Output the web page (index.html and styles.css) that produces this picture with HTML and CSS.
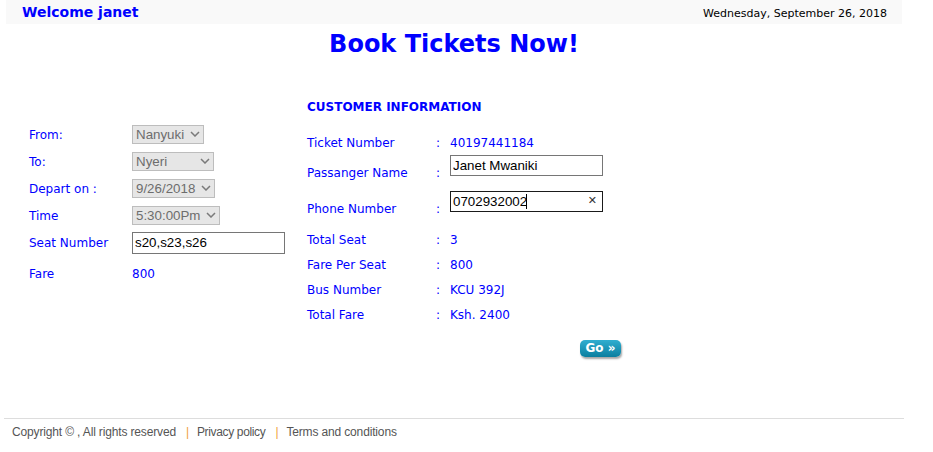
FILE: index.html
```html
<!DOCTYPE html>
<html>
<head>
<meta charset="utf-8">
<title>Book Tickets</title>
<link rel="stylesheet" href="styles.css">
</head>
<body>
<div class="page">
  <div class="topbar">
    <span class="welcome">Welcome janet</span>
    <span class="date">Wednesday, September 26, 2018</span>
  </div>
  <h1 class="title">Book Tickets Now!</h1>
  <div class="main">
    <div class="trip">
      <div class="trip-row">
        <span class="label">From:</span>
        <span class="sel-wrap w72"><select class="sel" disabled><option>Nanyuki</option></select><svg class="chev" viewBox="0 0 10 6"><path d="M1 1l4 4 4-4" fill="none" stroke="#7a7a7a" stroke-width="1.5"/></svg></span>
      </div>
      <div class="trip-row">
        <span class="label">To:</span>
        <span class="sel-wrap w82"><select class="sel" disabled><option>Nyeri</option></select><svg class="chev" viewBox="0 0 10 6"><path d="M1 1l4 4 4-4" fill="none" stroke="#7a7a7a" stroke-width="1.5"/></svg></span>
      </div>
      <div class="trip-row">
        <span class="label">Depart on :</span>
        <span class="sel-wrap w83"><select class="sel" disabled><option>9/26/2018</option></select><svg class="chev" viewBox="0 0 10 6"><path d="M1 1l4 4 4-4" fill="none" stroke="#7a7a7a" stroke-width="1.5"/></svg></span>
      </div>
      <div class="trip-row">
        <span class="label">Time</span>
        <span class="sel-wrap w88"><select class="sel" disabled><option>5:30:00Pm</option></select><svg class="chev" viewBox="0 0 10 6"><path d="M1 1l4 4 4-4" fill="none" stroke="#7a7a7a" stroke-width="1.5"/></svg></span>
      </div>
      <div class="trip-row">
        <span class="label">Seat Number</span>
        <input class="txt seat" type="text" value="s20,s23,s26">
      </div>
      <div class="trip-row fare-row">
        <span class="label">Fare</span>
        <span class="value">800</span>
      </div>
    </div>
    <div class="customer">
      <div class="cust-head">CUSTOMER INFORMATION</div>
      <div class="info">
        <div class="info-row"><span class="label">Ticket Number</span><span class="colon">:</span><span class="value">40197441184</span></div>
        <div class="info-row tall"><span class="label">Passanger Name</span><span class="colon">:</span><span class="field"><input class="txt" type="text" value="Janet Mwaniki"></span></div>
        <div class="info-row tall"><span class="label">Phone Number</span><span class="colon">:</span><span class="field"><span class="focus-wrap"><input class="txt focused" type="text" value="0702932002"><span class="caret"></span><span class="clear">✕</span></span></span></div>
        <div class="info-row"><span class="label">Total Seat</span><span class="colon">:</span><span class="value">3</span></div>
        <div class="info-row"><span class="label">Fare Per Seat</span><span class="colon">:</span><span class="value">800</span></div>
        <div class="info-row"><span class="label">Bus Number</span><span class="colon">:</span><span class="value">KCU 392J</span></div>
        <div class="info-row"><span class="label">Total Fare</span><span class="colon">:</span><span class="value">Ksh. 2400</span></div>
      </div>
      <button class="go" type="button">Go »</button>
    </div>
  </div>
  <div class="footer">
    <span>Copyright © , All rights reserved</span>
    <span class="sep">|</span>
    <span class="tight">Privacy policy</span>
    <span class="sep">|</span>
    <span>Terms and conditions</span>
  </div>
</div>
</body>
</html>
```

FILE: styles.css
```css
html, body {
  margin: 0;
  padding: 0;
  background: #fff;
}

body {
  font-family: "DejaVu Sans", Verdana, sans-serif;
  font-size: 12px;
  color: #0000ff;
}

.page {
  width: 900px;
  margin-left: 4px;
}

.topbar {
  margin: 0 2px;
  height: 24px;
  background: #f9f9f9;
  display: flex;
  justify-content: space-between;
  align-items: center;
  padding: 0 15px 0 16px;
}

.welcome {
  font-size: 14px;
  font-weight: bold;
  color: #0000ff;
  line-height: 17px;
}

.date {
  font-size: 11px;
  color: #000;
  line-height: 13px;
  padding-top: 3px;
}

.title {
  margin: 6px 0 0;
  font-size: 24px;
  line-height: 28px;
  font-weight: bold;
  text-align: center;
  color: #0000ff;
}

.main {
  display: flex;
  align-items: flex-start;
  padding-left: 25px;
}

.trip {
  width: 278px;
  margin-top: 63px;
  display: flex;
  flex-direction: column;
}

.trip-row {
  height: 27px;
  display: flex;
  align-items: center;
}

.trip-row .label {
  width: 103px;
  flex: none;
  line-height: 15px;
  padding-top: 2px;
}

.trip-row.fare-row {
  margin-top: 5px;
  height: 24px;
}

.trip-row .value {
  padding-top: 2px;
}

.value {
  line-height: 15px;
}

.sel-wrap {
  position: relative;
  display: inline-block;
  height: 19px;
}

.w72 { width: 72px; }
.w82 { width: 82px; }
.w83 { width: 83px; }
.w88 { width: 88px; }

.sel {
  -webkit-appearance: none;
  appearance: none;
  width: 100%;
  height: 19px;
  margin: 0;
  padding: 0 0 0 3px;
  border: 1px solid #bdbdbd;
  border-radius: 0;
  background: #e6e6e6;
  color: #6d6d6d;
  font-family: "Liberation Sans", Arial, sans-serif;
  font-size: 13.333px;
  line-height: 17px;
  opacity: 1;
}

.chev {
  position: absolute;
  right: 4px;
  top: 6px;
  width: 10px;
  height: 6px;
  pointer-events: none;
}

.txt {
  box-sizing: border-box;
  width: 153px;
  height: 21px;
  margin: 0;
  padding: 1px 2px;
  border: 1px solid #767676;
  border-radius: 0;
  font-family: "Liberation Sans", Arial, sans-serif;
  font-size: 13.333px;
  color: #000;
  background: #fff;
  outline: none;
}

.txt.seat {
  height: 22px;
}

.customer {
  margin-top: 42px;
  display: flex;
  flex-direction: column;
}

.cust-head {
  font-weight: bold;
  line-height: 15px;
  margin-bottom: 14px;
}

.info {
  display: flex;
  flex-direction: column;
}

.info-row {
  display: grid;
  grid-template-columns: 129px 14px 160px;
  height: 25px;
  align-items: center;
  line-height: 15px;
}

.info-row > .label,
.info-row > .colon,
.info-row > .value {
  padding-top: 3px;
}

.info-row.tall {
  height: 36px;
}

.info-row.tall > .label,
.info-row.tall > .colon {
  padding-top: 2px;
}

.field {
  padding: 1px 0 14px;
  display: block;
  height: 21px;
}

.focus-wrap {
  position: relative;
  display: inline-block;
}

.txt.focused {
  border-color: #1a1a1a;
}

.caret {
  position: absolute;
  left: 76px;
  top: 3px;
  width: 1px;
  height: 15px;
  background: #000;
}

.clear {
  position: absolute;
  right: 6px;
  top: 3px;
  font-family: "DejaVu Sans", sans-serif;
  font-size: 11px;
  line-height: 14px;
  color: #333;
}

.go {
  margin: 14px 0 0 273px;
  width: 41px;
  height: 17px;
  padding: 0;
  border: none;
  border-radius: 5px;
  background: linear-gradient(#30aed0, #0a7e9f);
  box-shadow: 1px 2px 2px rgba(0, 0, 0, 0.35);
  color: #fff;
  font-family: "DejaVu Sans", Verdana, sans-serif;
  font-size: 12px;
  font-weight: bold;
  line-height: 17px;
  align-self: flex-start;
}

.footer {
  margin-top: 61px;
  border-top: 1px solid #dddddd;
  padding: 6px 0 0 8px;
  font-family: "Liberation Sans", Arial, sans-serif;
  font-size: 12px;
  letter-spacing: -0.15px;
  line-height: 14px;
  color: #555;
  display: flex;
}

.footer .tight {
  letter-spacing: -0.35px;
}

.footer .sep {
  color: #f0a040;
  padding: 0 8px 0 10px;
}
```
